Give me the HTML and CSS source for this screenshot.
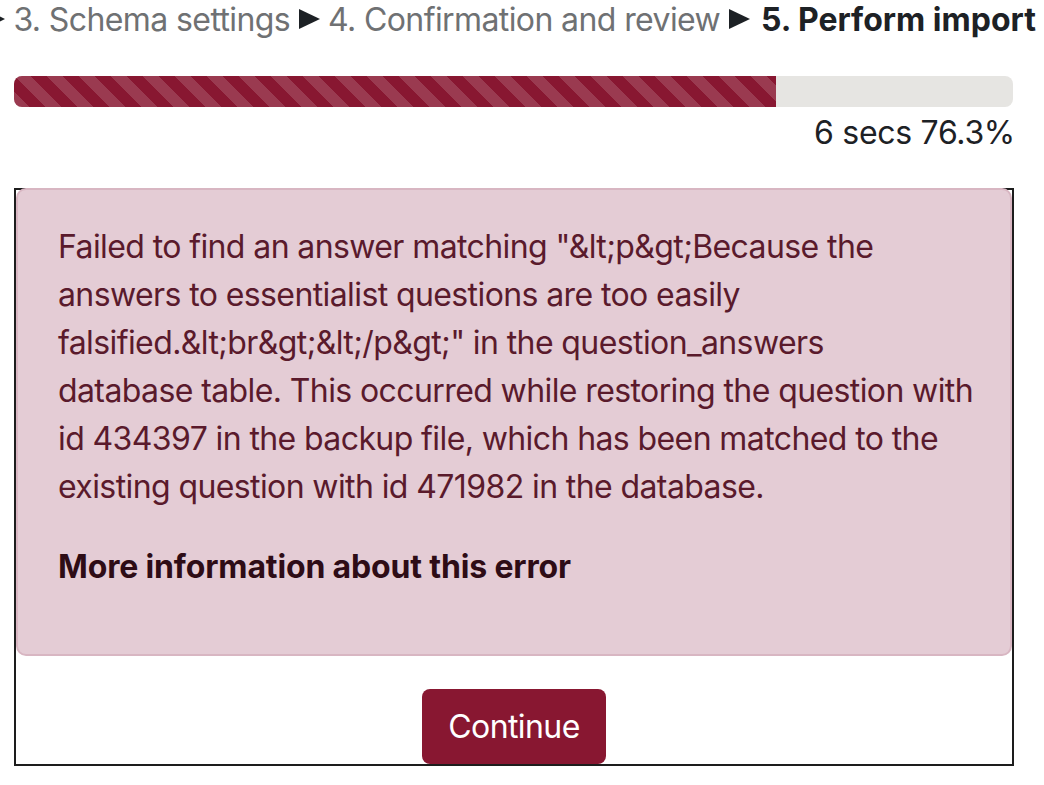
FILE: index.html
```html
<!DOCTYPE html>
<html>
<head>
<meta charset="utf-8">
<link rel="stylesheet" href="styles.css">
</head>
<body>
<div class="steps"><span class="arrow"></span> <span class="step">3. Schema settings</span> <span class="arrow"></span> <span class="step">4. Confirmation and review</span> <span class="arrow"></span> <span class="step current">5. Perform import</span></div>
<div class="main">
  <div class="progress"><div class="progress-bar" style="width: 76.3%"></div></div>
  <div class="progress-info">6 secs&nbsp;76.3%</div>
  <div class="box">
    <div class="alert">
      <p class="msg">Failed to find an answer matching "&amp;lt;p&amp;gt;Because the answers to essentialist questions are too easily falsified.&amp;lt;br&amp;gt;&amp;lt;/p&amp;gt;" in the question_answers<br>database table. This occurred while restoring the question with id 434397 in the backup file, which has been matched to the existing question with id 471982 in the database.</p>
      <p class="more">More information about this error</p>
    </div>
    <div class="actions"><button class="btn">Continue</button></div>
  </div>
</div>
</body>
</html>
```
FILE: styles.css
```css
html, body {
  margin: 0;
  padding: 0;
  background: #fff;
  overflow: hidden;
}
body {
  font-family: Inter, "Noto Sans", "Liberation Sans", sans-serif;
  color: #1d2125;
  width: 1044px;
  height: 785px;
}
.steps {
  font-size: 32px;
  line-height: 40px;
  letter-spacing: -0.6px;
  white-space: nowrap;
  margin-left: -16px;
  color: #6f7173;
}
.arrow {
  display: inline-block;
  width: 0;
  height: 0;
  border-left: 21px solid #1d2125;
  border-top: 10px solid transparent;
  border-bottom: 10px solid transparent;
  vertical-align: 2px;
}
.step.current {
  color: #1d2125;
  font-weight: 700;
  letter-spacing: 0;
  margin-left: 3px;
}
.main {
  margin-left: 14px;
  width: 1000px;
}
.progress {
  margin-top: 36px;
  height: 31px;
  width: 999px;
  border-radius: 8px;
  background: #e6e5e2;
  overflow: hidden;
  display: flex;
}
.progress-bar {
  height: 100%;
  background-color: #881731;
  background-image: linear-gradient(45deg, rgba(255,255,255,.15) 25%, transparent 25%, transparent 50%, rgba(255,255,255,.15) 50%, rgba(255,255,255,.15) 75%, transparent 75%, transparent);
  background-size: 32px 32px;
}
.progress-info {
  width: 1001px;
  text-align: right;
  font-size: 32px;
  line-height: 45px;
  letter-spacing: -0.3px;
  margin-top: 3px;
}
.box {
  margin-top: 33px;
  border: 2px solid #1d1d1d;
  display: flex;
  flex-direction: column;
}
.alert {
  margin: -2px 0 0 0;
  background: #e4ccd5;
  border: 2px solid #d8b6c2;
  border-radius: 10px;
  padding: 33px 30px 31px 40px;
  color: #5a1a2c;
  font-size: 32px;
  line-height: 48px;
  letter-spacing: -0.6px;
}
.alert p {
  margin: 0 0 32px 0;
}
.alert .more {
  font-weight: 700;
  letter-spacing: -0.15px;
  color: #2e0c16;
}
.actions {
  display: flex;
  justify-content: center;
  margin-top: 33px;
}
.btn {
  font-family: inherit;
  font-size: 32px;
  line-height: 47px;
  letter-spacing: -0.6px;
  padding: 14px 26px;
  color: #fff;
  background: #881731;
  border: none;
  border-radius: 8px;
}
```
